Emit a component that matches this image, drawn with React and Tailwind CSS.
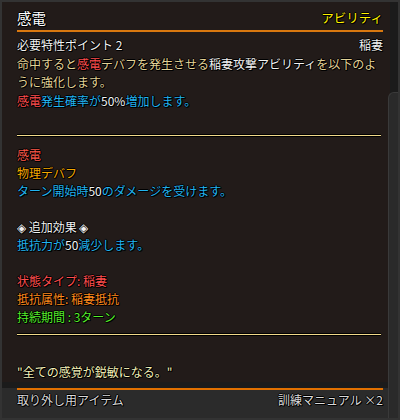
import React from 'react';

const outline = '[text-shadow:1px_1px_0_#000,-1px_0_0_#000,0_-1px_0_#000,1px_0_0_#000,0_1px_0_#000]';

function Line({ className, children }) {
    return <div className={`h-[18px] leading-[18px] ${className || ''}`}>{children}</div>;
}

export default function App() {
    return (
        <div
            className={`relative w-[400px] h-[420px] bg-[#1b1b1b] border-2 border-[#333] overflow-hidden text-[12px] ${outline}`}
            style={{ fontFamily: '"Noto Sans CJK JP", "Noto Sans", sans-serif' }}
        >
            <div className="absolute right-0 top-[90px] bottom-0 w-[10px] bg-[#2a2a2a] border-l border-t border-[#3a3a3a] rounded-tl-md" />
            <div className="flex flex-col h-[380px] bg-[#221b19] mr-[8px] pl-[15px] pr-[7px]">
                <div className="flex justify-between items-center h-[20px] mt-[6px] leading-[20px]">
                    <span className="text-[14.5px] text-white">感電</span>
                    <span className="text-[12.5px] text-[#fff000]">アビリティ</span>
                </div>
                <div className="h-[2px] mt-[2px] bg-[#d9780f]" />
                <div className="flex justify-between h-[18.5px] leading-[18.5px] mt-[4px] text-[#f2f2f2]">
                    <span>必要特性ポイント 2</span>
                    <span>稲妻</span>
                </div>
                <div className="leading-[18.5px] text-[#e2d196] whitespace-nowrap">
                    <div>
                        命中すると<span className="text-[#ff4e4e]">感電</span>デバフを発生させる<span className="text-[#f2f2f2]">稲妻攻撃アビリティ</span>を以下のよ
                    </div>
                    <div>うに強化します。</div>
                    <div>
                        <span className="text-[#ff4e4e]">感電</span>
                        <span className="text-[#22b4f0]">発生確率が</span>
                        <span className="text-[#f2f2f2]">50%</span>
                        <span className="text-[#22b4f0]">増加します。</span>
                    </div>
                </div>
                <div className="h-[3px] mt-[24px] bg-[#f2d98a] border-y border-black mr-[2px]" />
                <div className="mt-[9px]">
                    <Line className="text-[#ff5a4a]">感電</Line>
                    <Line className="text-[#f5a800]">物理デバフ</Line>
                    <Line className="text-[#22b4f0]">
                        ターン開始時<span className="text-[#f2f2f2]">50</span>のダメージを受けます。
                    </Line>
                    <Line />
                    <Line className="text-[#f2f2f2]">◈ 追加効果 ◈</Line>
                    <Line className="text-[#22b4f0]">
                        抵抗力が<span className="text-[#f2f2f2]">50</span>減少します。
                    </Line>
                    <Line />
                    <Line className="text-[#ff4e4e]">状態タイプ: 稲妻</Line>
                    <Line className="text-[#ff8a1c]">抵抗属性: 稲妻抵抗</Line>
                    <Line className="text-[#55ee2a]">持続期間 : 3ターン</Line>
                </div>
                <div className="h-[3px] mt-[7px] bg-[#f2d98a] border-y border-black mr-[2px]" />
                <div className="mt-[27px] h-[18px] leading-[18px] text-[#f4f0b8]">"全ての感覚が鋭敏になる。"</div>
            </div>
            <div className="h-[34px] bg-[#2b2b2b] mr-[8px] pl-[15px] pr-[7px]">
                <div className="h-[2px] mt-[6px] bg-[#e07000]" />
                <div className="flex justify-between h-[18px] leading-[18px] mt-[1px] text-[12px] text-[#d8d8d8]">
                    <span>取り外し用アイテム</span>
                    <span>訓練マニュアル ×2</span>
                </div>
            </div>
        </div>
    );
}
